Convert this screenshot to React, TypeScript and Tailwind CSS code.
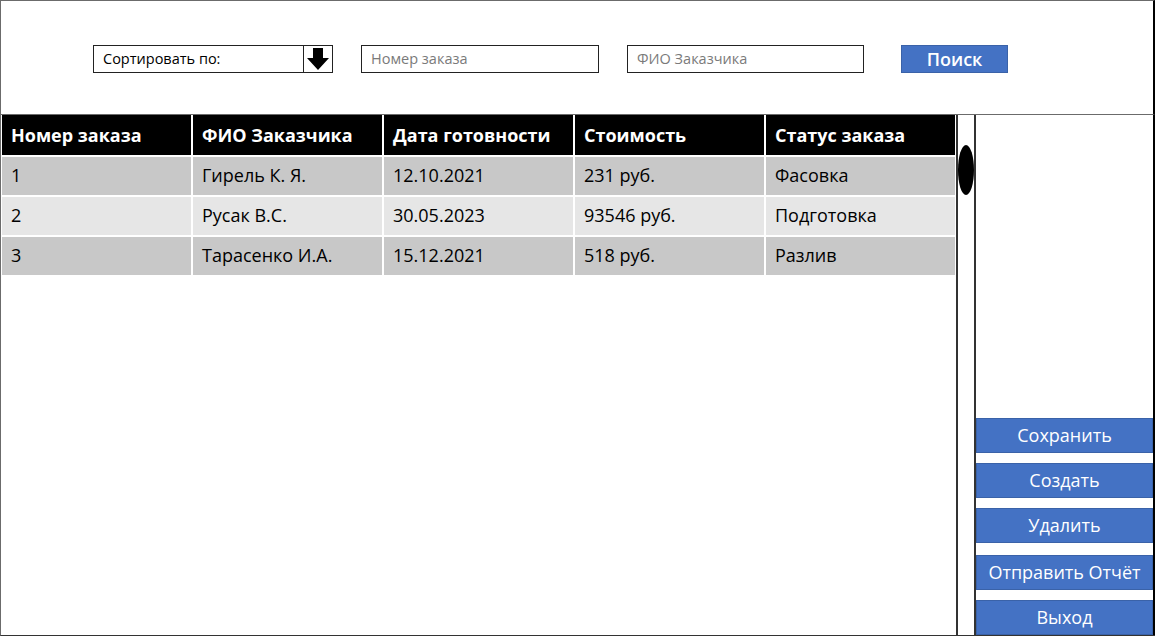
import React from "react";

const cols = ["Номер заказа", "ФИО Заказчика", "Дата готовности", "Стоимость", "Статус заказа"];

const rows = [
  ["1", "Гирель К. Я.", "12.10.2021", "231 руб.", "Фасовка"],
  ["2", "Русак В.С.", "30.05.2023", "93546 руб.", "Подготовка"],
  ["3", "Тарасенко И.А.", "15.12.2021", "518 руб.", "Разлив"],
];

const actions = [
  { label: "Сохранить", cls: "mt-0" },
  { label: "Создать", cls: "mt-[10px]" },
  { label: "Удалить", cls: "mt-[10px]" },
  { label: "Отправить Отчёт", cls: "mt-[12px]" },
  { label: "Выход", cls: "mt-[10px]" },
];

export default function App() {
  return (
    <div className="w-[1155px] h-[636px] bg-white overflow-hidden font-['Open_Sans',sans-serif]">
      {/* search bar */}
      <div className="h-[115px] border border-[#6b6b6b] border-r-2 border-r-black flex items-start pt-[44px] pl-[92px]">
        <div className="flex w-[240px] h-[28px] border border-[#222]">
          <div className="flex-1 flex items-center pl-[9px] text-[14.5px] text-black">
            Сортировать по:
          </div>
          <div className="w-[29px] border-l border-[#222] flex items-center justify-center">
            <svg width="24" height="22" viewBox="0 0 24 22">
              <path d="M7 0h10v10h6L12 22 1 10h6z" fill="#000" />
            </svg>
          </div>
        </div>
        <div className="ml-[28px] w-[238px] h-[28px] border border-[#222] flex items-center pl-[9px] text-[14.5px] text-[#7a7a7a]">
          Номер заказа
        </div>
        <div className="ml-[28px] w-[237px] h-[28px] border border-[#222] flex items-center pl-[9px] text-[14.5px] text-[#7a7a7a]">
          ФИО Заказчика
        </div>
        <div className="ml-[37px] w-[107px] h-[28px] bg-[#4472c4] border border-[#3a62a8] flex items-center justify-center text-white text-[18px] font-semibold">
          Поиск
        </div>
      </div>

      <div className="flex h-[521px] border-l border-[#6b6b6b] border-b border-b-[#333]">
        {/* table */}
        <div className="w-[954px] pl-[1px]">
          <div className="grid grid-cols-5 gap-x-[2px] bg-white">
            {cols.map((c) => (
              <div key={c} className="h-[40px] bg-black text-white font-bold text-[18px] flex items-center pl-[9px]">
                {c}
              </div>
            ))}
          </div>
          {rows.map((r, i) => (
            <div key={i} className="grid grid-cols-5 gap-x-[2px] mt-[2px]">
              {r.map((v, j) => (
                <div
                  key={j}
                  className={
                    "h-[38px] text-black text-[18px] flex items-center pl-[9px] pb-[2px] " +
                    (i === 1 ? "bg-[#e6e6e6]" : "bg-[#c8c8c8]")
                  }
                >
                  {v}
                </div>
              ))}
            </div>
          ))}
        </div>

        {/* scrollbar */}
        <div className="w-[20px] ml-[1px] border-x-2 border-[#333] pt-[30px]">
          <div className="w-[16px] h-[50px] rounded-[50%] bg-black" />
        </div>

        {/* actions */}
        <div className="flex-1 flex flex-col justify-end border-r-2 border-black">
          {actions.map((a) => (
            <div
              key={a.label}
              className={
                "h-[35px] bg-[#4472c4] border border-[#3a62a8] flex items-center justify-center text-white text-[18px] " +
                a.cls
              }
            >
              {a.label}
            </div>
          ))}
        </div>
      </div>
    </div>
  );
}
